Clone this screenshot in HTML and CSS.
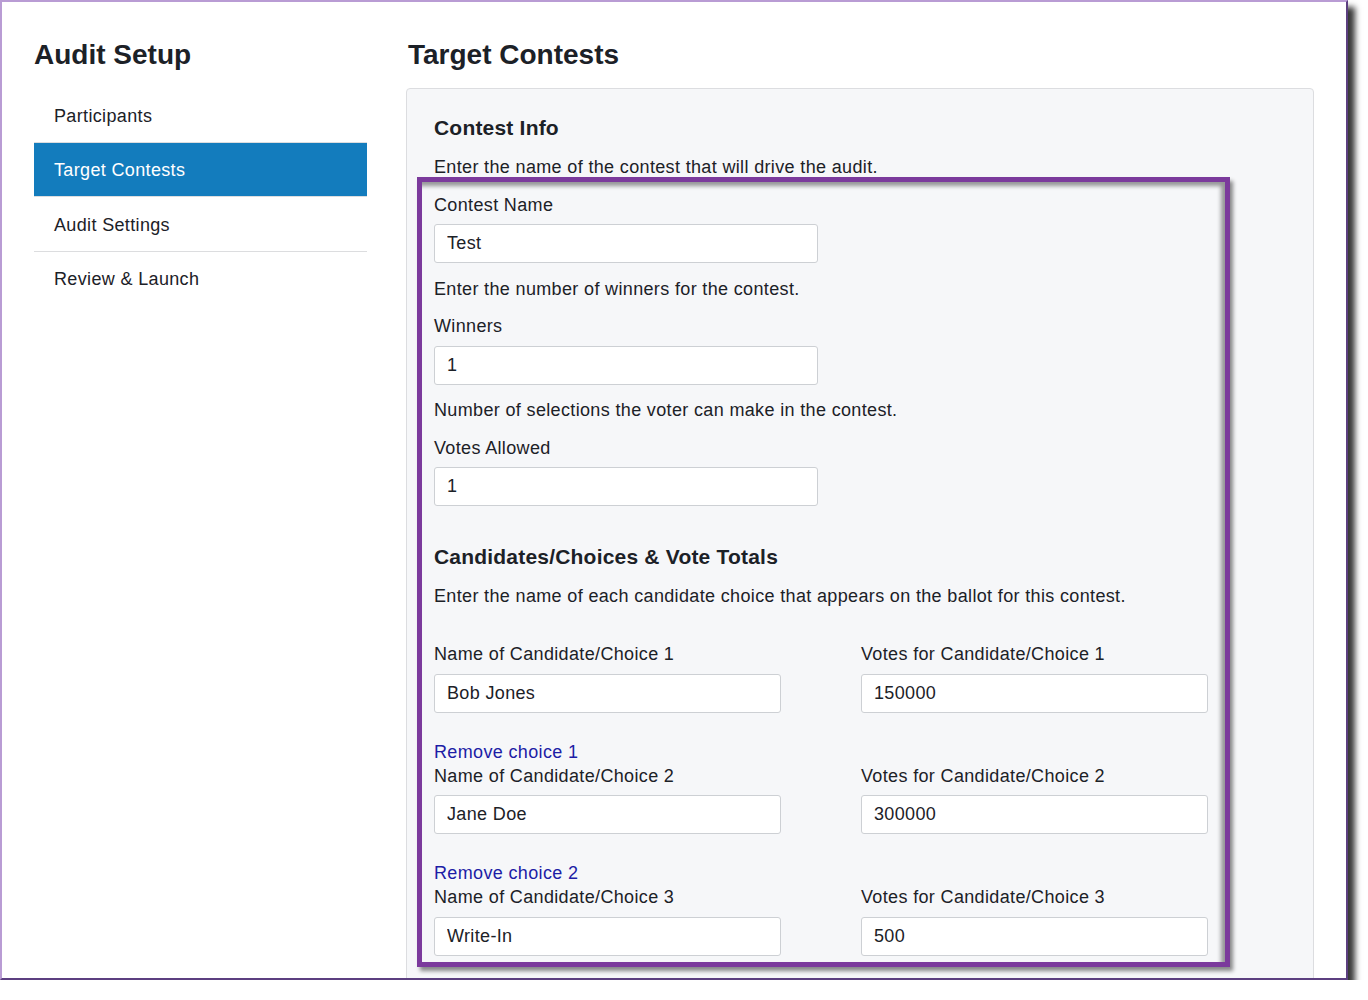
FILE: index.html
```html
<!DOCTYPE html>
<html lang="en">
<head>
<meta charset="utf-8">
<title>Audit Setup - Target Contests</title>
<link rel="stylesheet" href="styles.css">
</head>
<body>
<div class="window">
  <aside class="sidebar">
    <h1 class="page-title">Audit Setup</h1>
    <nav class="nav">
      <a class="nav-item">Participants</a>
      <a class="nav-item active">Target Contests</a>
      <a class="nav-item">Audit Settings</a>
      <a class="nav-item">Review &amp; Launch</a>
    </nav>
  </aside>
  <main class="main">
    <h1 class="page-title main-title">Target Contests</h1>
    <section class="panel">
      <h2 class="section-title">Contest Info</h2>
      <p class="help">Enter the name of the contest that will drive the audit.</p>
      <div class="field">
        <label class="label">Contest Name</label>
        <input class="input input-wide" value="Test">
      </div>
      <p class="help after-field">Enter the number of winners for the contest.</p>
      <div class="field">
        <label class="label">Winners</label>
        <input class="input input-wide" value="1">
      </div>
      <p class="help after-field">Number of selections the voter can make in the contest.</p>
      <div class="field">
        <label class="label">Votes Allowed</label>
        <input class="input input-wide" value="1">
      </div>

      <h2 class="section-title section-gap">Candidates/Choices &amp; Vote Totals</h2>
      <p class="help help-tall">Enter the name of each candidate choice that appears on the ballot for this contest.</p>

      <div class="choices">
        <div class="choice-row">
          <div class="choice-col">
            <label class="label">Name of Candidate/Choice 1</label>
            <input class="input input-half" value="Bob Jones">
          </div>
          <div class="choice-col">
            <label class="label">Votes for Candidate/Choice 1</label>
            <input class="input input-half" value="150000">
          </div>
        </div>
        <a class="remove-link">Remove choice 1</a>
        <div class="choice-row">
          <div class="choice-col">
            <label class="label">Name of Candidate/Choice 2</label>
            <input class="input input-half" value="Jane Doe">
          </div>
          <div class="choice-col">
            <label class="label">Votes for Candidate/Choice 2</label>
            <input class="input input-half" value="300000">
          </div>
        </div>
        <a class="remove-link">Remove choice 2</a>
        <div class="choice-row">
          <div class="choice-col">
            <label class="label">Name of Candidate/Choice 3</label>
            <input class="input input-half" value="Write-In">
          </div>
          <div class="choice-col">
            <label class="label">Votes for Candidate/Choice 3</label>
            <input class="input input-half" value="500">
          </div>
        </div>
      </div>

      <div class="highlight" aria-hidden="true"></div>
    </section>
  </main>
</div>
</body>
</html>
```
FILE: styles.css
```css
html, body {
  margin: 0;
  padding: 0;
  background: #ffffff;
}

body {
  font-family: "Liberation Sans", Arial, sans-serif;
  color: #1c2127;
  font-size: 18px;
}

.window {
  box-sizing: border-box;
  width: 1348px;
  height: 980px;
  overflow: hidden;
  background: #ffffff;
  border-style: solid;
  border-width: 2px;
  border-color: #b99cd4 #5c3f80 #5c3f80 #b99cd4;
  box-shadow: 7px 7px 6px rgba(0, 0, 0, 0.78);
  padding: 36px 32px 0 32px;
  display: grid;
  grid-template-columns: 333px 1fr;
  column-gap: 39px;
  align-items: start;
}

.page-title {
  margin: 0 0 16px 0;
  font-size: 28px;
  line-height: 34px;
  font-weight: 700;
  color: #1c2127;
}

.main-title {
  padding-left: 2px;
}

.nav {
  display: flex;
  flex-direction: column;
}

.nav-item {
  display: block;
  box-sizing: border-box;
  height: 55px;
  padding-top: 1px;
  line-height: 54px;
  padding-left: 20px;
  border-bottom: 1px solid #dcdddf;
  color: #1c2127;
  letter-spacing: 0.35px;
  text-decoration: none;
}

.nav-item:last-child {
  border-bottom: none;
  padding-top: 0;
}

.nav-item.active {
  background: #137cbd;
  color: #ffffff;
  height: 54px;
  padding-top: 0;
  line-height: 54px;
}

.main {
  min-width: 0;
}

.panel {
  position: relative;
  background: #f6f7f9;
  border: 1px solid #dcdde0;
  border-radius: 4px;
  padding: 27px 27px 60px 27px;
  min-height: 1000px;
}

.section-title {
  margin: 0;
  font-size: 21px;
  line-height: 24px;
  font-weight: 700;
  letter-spacing: 0.2px;
  color: #1c2127;
}

.section-gap {
  margin-top: 39px;
}

.help {
  margin: 16px 0 0 0;
  line-height: 22px;
  letter-spacing: 0.35px;
}

.help-tall {
  margin-top: 16px;
}

.after-field {
  margin-top: 14.5px;
}

.field {
  margin-top: 15.5px;
}

.label {
  display: block;
  line-height: 22px;
  letter-spacing: 0.35px;
  margin-bottom: 8.5px;
}

.input {
  display: block;
  box-sizing: border-box;
  height: 39px;
  padding: 0 12px;
  margin: 0;
  background: #ffffff;
  border: 1px solid #cdd0d4;
  border-radius: 3px;
  font-family: "Liberation Sans", Arial, sans-serif;
  font-size: 18px;
  letter-spacing: 0.35px;
  color: #1c2127;
  outline: none;
}

.input-wide {
  width: 384px;
}

.input-half {
  width: 347px;
}

.choices {
  margin-top: 36px;
}

.choice-row {
  display: grid;
  grid-template-columns: 427px 1fr;
}

.remove-link {
  display: block;
  margin: 28px 0 2px 0;
  line-height: 22px;
  color: #1d1da6;
  letter-spacing: 0.35px;
  text-decoration: none;
}

.highlight {
  position: absolute;
  left: 10px;
  top: 88px;
  width: 813px;
  height: 790px;
  box-sizing: border-box;
  border: 5px solid #7b3a9c;
  box-shadow: 3px 4px 4px rgba(0, 0, 0, 0.45), inset -4px 4px 4px rgba(0, 0, 0, 0.4);
  pointer-events: none;
}
```
